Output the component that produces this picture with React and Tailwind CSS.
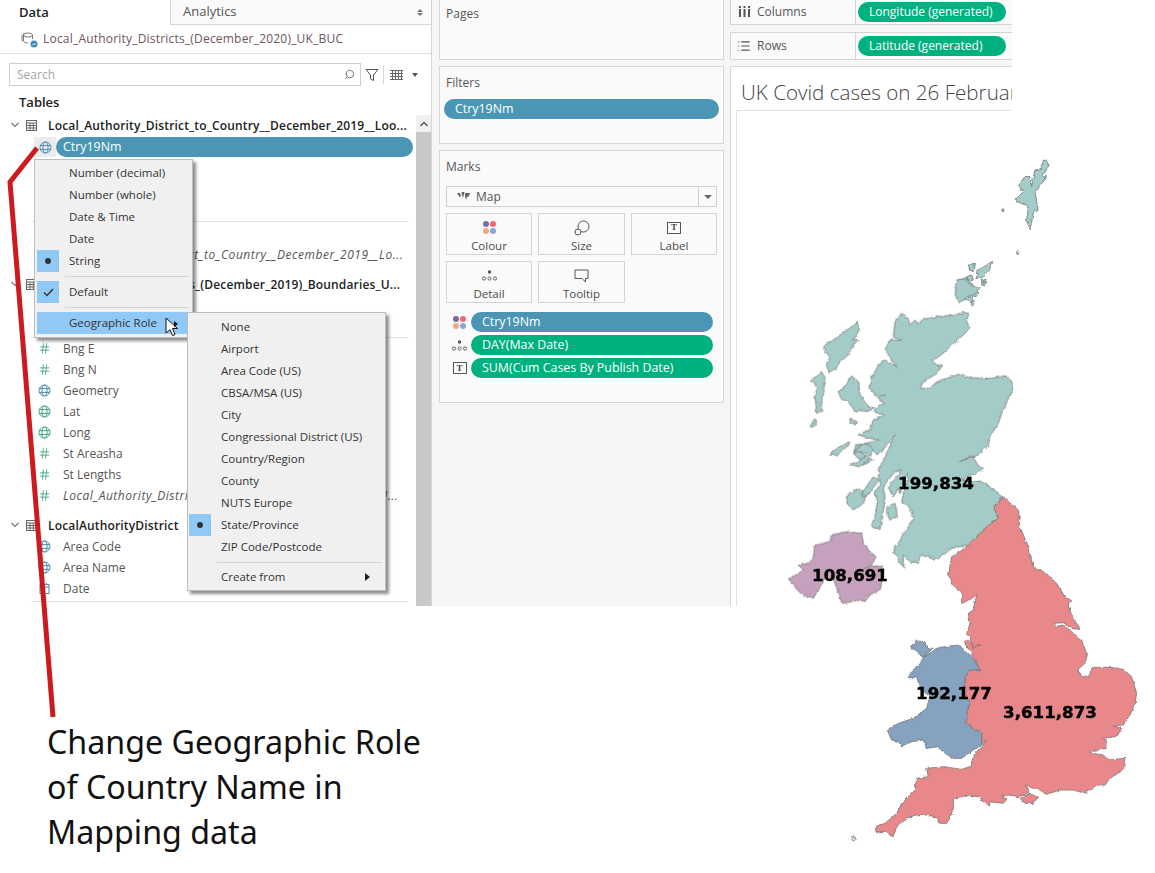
import { Hash, List, Search } from 'lucide-react';

const blue = 'bg-[#4a96b4]';
const green = 'bg-[#00b180]';

const Globe = ({ color = '#4a8fb0' }) => (
  <svg width="13" height="13" viewBox="0 0 13 13" fill="none" stroke={color} strokeWidth="1">
    <circle cx="6.5" cy="6.5" r="5.5" />
    <ellipse cx="6.5" cy="6.5" rx="2.6" ry="5.5" />
    <path d="M1 4.6h11M1 8.4h11" />
  </svg>
);

const HashIcon = () => <Hash size={13} strokeWidth={1.6} className="text-[#3fa583]" />;

const DateIcon = () => (
  <svg width="13" height="13" viewBox="0 0 13 13" fill="none" stroke="#4a8fb0" strokeWidth="1">
    <rect x="2" y="2.5" width="9" height="9" />
    <path d="M2 5h9M4.5 1v2M8.5 1v2" />
  </svg>
);

const TableIcon = () => (
  <svg width="11" height="11" viewBox="0 0 11 11" fill="none" stroke="#666" strokeWidth="1">
    <rect x="0.5" y="0.5" width="10" height="10" />
    <path d="M0.5 3h10M0.5 5.5h10M0.5 8h10M4 3v7.5M7.3 3v7.5" />
  </svg>
);

const Chevron = () => (
  <svg width="8" height="6" viewBox="0 0 8 6" fill="none" stroke="#777" strokeWidth="1.2">
    <path d="M0.5 1l3.5 3.5L7.5 1" />
  </svg>
);

const TableHead = ({ children, className = '' }) => (
  <div className={`flex h-[20px] items-center pl-[8px] ${className}`}>
    <span className="flex w-[14px] justify-center"><Chevron /></span>
    <span className="ml-[3px] flex w-[12px] justify-center"><TableIcon /></span>
    <span className="ml-[11px] w-[365px] truncate pt-[2px] text-[12px] font-semibold tracking-[0.16px] text-[#222]">{children}</span>
  </div>
);

const Field = ({ icon, children, italic }) => (
  <div className="flex h-[21px] items-center pl-[38px]">
    <span className="flex w-[13px] justify-center">{icon}</span>
    <span className={`ml-[12px] w-[345px] truncate text-[12px] text-[#555] ${italic ? 'italic tracking-[0.53px]' : ''}`}>{children}</span>
  </div>
);

const Dots = () => (
  <span className="grid grid-cols-2 gap-[1px]">
    <i className="h-[6px] w-[6px] rounded-full bg-[#7d6b98]" />
    <i className="h-[6px] w-[6px] rounded-full bg-[#f0677c]" />
    <i className="h-[6px] w-[6px] rounded-full bg-[#f2a87c]" />
    <i className="h-[6px] w-[6px] rounded-full bg-[#86a8d4]" />
  </span>
);

const DetailIcon = () => (
  <svg width="15" height="11" viewBox="0 0 15 11" fill="none" stroke="#555" strokeWidth="0.9">
    <circle cx="7.5" cy="2" r="1.7" fill="#555" stroke="none" />
    <circle cx="2" cy="8.5" r="1.6" />
    <circle cx="7.5" cy="8.5" r="1.6" />
    <circle cx="13" cy="8.5" r="1.6" />
  </svg>
);

const LabelIcon = () => (
  <span className="flex h-[12px] w-[14px] items-center justify-center border border-[#555] font-['Liberation_Serif',serif] text-[9px] font-bold leading-none text-[#444]">T</span>
);

const SizeIcon = () => (
  <svg width="16" height="16" viewBox="0 0 16 16" fill="none" stroke="#555" strokeWidth="1">
    <circle cx="9.5" cy="6.5" r="5.5" />
    <circle cx="4" cy="12" r="3" fill="#fafafa" />
  </svg>
);

const TooltipIcon = () => (
  <svg width="15" height="14" viewBox="0 0 15 14" fill="none" stroke="#555" strokeWidth="1">
    <path d="M1 1h13v8.5h-2.5V13L8 9.5H1z" />
  </svg>
);

const MarkButton = ({ icon, label }) => (
  <div className="flex h-[42px] flex-col items-center border border-[#d4d4d4] bg-[#fafafa]">
    <span className="flex h-[25px] items-center pt-[2px]">{icon}</span>
    <span className="text-[11.5px] leading-[14px] text-[#4a4a4a]">{label}</span>
  </div>
);

const Pill = ({ color, size = 'text-[12.4px]', className = 'pl-[11px]', children }) => (
  <div className={`flex h-[20px] items-center rounded-full text-white ${size} ${color} ${className}`}>{children}</div>
);

const Box = ({ className = '', children }) => (
  <div className={`border border-[#d6d6d6] bg-[#fafafa] ${className}`}>{children}</div>
);

const MenuRow = ({ mark, active, arrow, children }) => (
  <div className={`mx-[2px] flex h-[22px] items-center text-[11.5px] text-[#333] ${active ? 'bg-[#90c8f6]' : ''}`}>
    <span className={`flex h-[22px] w-[22px] items-center justify-center ${mark ? 'bg-[#90c8f6]' : ''}`}>
      {mark === 'dot' && <i className="h-[6px] w-[6px] rounded-full bg-[#333]" />}
      {mark === 'check' && (
        <svg width="11" height="9" viewBox="0 0 11 9" fill="none" stroke="#333" strokeWidth="1.4"><path d="M1 4.5l3 3L10 1" /></svg>
      )}
    </span>
    <span className="ml-[10px] flex-1">{children}</span>
    {arrow && <i className="mr-[14px] h-0 w-0 border-y-[4px] border-l-[5px] border-y-transparent border-l-[#222]" />}
  </div>
);

const MenuLine = ({ className = '' }) => <div className={`h-px bg-[#d4d4d4] ${className}`} />;

const typeRows = ['Number (decimal)', 'Number (whole)', 'Date & Time', 'Date'];
const roles = ['None', 'Airport', 'Area Code (US)', 'CBSA/MSA (US)', 'City', 'Congressional District (US)', 'Country/Region', 'County', 'NUTS Europe'];

const TypeMenu = () => (
  <div className="absolute left-[34px] top-[159px] w-[159px] border border-[#bdbdbd] bg-[#f0f0f0] pb-[3px] pt-[2px] shadow-[3px_3px_3px_rgba(0,0,0,0.45)]">
    {typeRows.map((t) => <MenuRow key={t}>{t}</MenuRow>)}
    <MenuRow mark="dot">String</MenuRow>
    <div className="flex h-[9px] items-center pl-[30px] pr-[3px]"><MenuLine className="w-full" /></div>
    <MenuRow mark="check">Default</MenuRow>
    <div className="flex h-[9px] items-center pl-[30px] pr-[3px]"><MenuLine className="w-full" /></div>
    <MenuRow active>Geographic Role</MenuRow>
  </div>
);

const RoleMenu = () => (
  <div className="absolute left-[187px] top-[312px] w-[199px] border border-[#bdbdbd] bg-[#f0f0f0] pb-[2px] pt-[3px] shadow-[3px_3px_3px_rgba(0,0,0,0.45)]">
    <div className="-mx-px">
      {roles.map((t) => <MenuRow key={t}>{t}</MenuRow>)}
      <MenuRow mark="dot">State/Province</MenuRow>
      <MenuRow>ZIP Code/Postcode</MenuRow>
      <div className="flex h-[8px] items-center pl-[30px] pr-[4px]"><MenuLine className="w-full" /></div>
      <MenuRow arrow>Create from</MenuRow>
    </div>
  </div>
);

const Cursor = () => (
  <svg className="absolute left-[165px] top-[317px]" width="16" height="21" viewBox="0 0 16 21">
    <path d="M1 1v15l4-3.5 2.5 6 2.5-1-2.5-6H12.5z" fill="#fff" stroke="#111" strokeWidth="1" />
    <path d="M9 4l4 3-4 3z" fill="#111" />
  </svg>
);

const DataPane = () => (
  <div className="relative h-full w-[432px] shrink-0 border-r border-[#d6d6d6] bg-white">
    <div className="flex h-[25px]">
      <div className="flex w-[170px] items-center pl-[19px] text-[13px] font-semibold text-[#222]">Data</div>
      <div className="flex flex-1 items-center justify-between border-b border-l border-[#d6d6d6] bg-[#fafafa] pl-[12px] pr-[8px] text-[13px] text-[#555]">
        Analytics
        <span className="flex flex-col gap-[1px]">
          <i className="h-0 w-0 border-x-[3px] border-b-[3px] border-x-transparent border-b-[#777]" />
          <i className="h-0 w-0 border-x-[3px] border-t-[3px] border-x-transparent border-t-[#777]" />
        </span>
      </div>
    </div>
    <div className="flex h-[29px] items-center border-b border-[#e0e0e0] pl-[21px]">
      <svg width="17" height="17" viewBox="0 0 17 17" fill="none" stroke="#777" strokeWidth="1">
        <ellipse cx="7" cy="4" rx="4.5" ry="2" />
        <path d="M2.5 4v6c0 1 2 2 4.500 2M11.500 4v4M4 2.500C2 3 1 4 1 5v5" />
        <circle cx="13" cy="13" r="3.500" fill="#3f8fb3" stroke="none" />
        <path d="M11.500 13l1 1 2-2" stroke="#fff" />
      </svg>
      <span className="ml-[5px] text-[12px] tracking-[0.2px] text-[#6d5560]">Local_Authority_Districts_(December_2020)_UK_BUC</span>
    </div>
    <div className="mt-[9px] flex h-[23px] items-center pl-[9px]">
      <div className="flex h-[23px] w-[352px] items-center justify-between border border-[#cfcfcf] pl-[7px] pr-[5px] text-[12px] text-[#a5a5a5]">
        Search
        <Search size={11} strokeWidth={1.5} className="-scale-x-100 text-[#444]" />
      </div>
      <svg className="ml-[4px]" width="14" height="14" viewBox="0 0 14 14" fill="none" stroke="#555" strokeWidth="1">
        <path d="M1 1.500h12L8.500 7v5.500L5.500 11V7z" />
      </svg>
      <div className="ml-[4px] h-[18px] w-px bg-[#d6d6d6]" />
      <svg className="ml-[6px]" width="13" height="10" viewBox="0 0 13 10" fill="none" stroke="#666" strokeWidth="1">
        <path d="M0 .5h13M0 3.500h13M0 6.500h13M0 9.500h13M2.500 0v10M5.500 0v10M8.500 0v10M11.500 0v10" />
      </svg>
      <i className="ml-[9px] h-0 w-0 border-x-[3px] border-t-[4px] border-x-transparent border-t-[#555]" />
    </div>
    <div className="mt-[9px] h-[14px] pl-[19px] text-[13px] font-semibold leading-[14px] text-[#222]">Tables</div>
    <div className="mt-[6px] flex">
      <div className="w-[416px]">
        <TableHead>Local_Authority_District_to_Country__December_2019__Loo...</TableHead>
        <div className="mt-[2px] flex h-[20px] items-center pl-[34px]">
          <span className="flex h-[20px] w-[22px] items-center justify-center bg-[#ececec]"><Globe /></span>
          <Pill color={blue} className="w-[357px] pl-[7px]">Ctry19Nm</Pill>
        </div>
        <div className="mx-[31px] mt-[64px] h-px w-[378px] bg-[#e2e2e2]" />
        <div className="mt-[22px]"><Field icon={<HashIcon />} italic>Local_Authority_District_to_Country__December_2019__Lo...</Field></div>
        <TableHead className="mt-[9px]">Local_Authority_Districts_(December_2019)_Boundaries_U...</TableHead>
        <div className="mx-[31px] mt-[43px] h-px w-[378px] bg-[#e2e2e2]" />
        <Field icon={<HashIcon />}>Bng E</Field>
        <Field icon={<HashIcon />}>Bng N</Field>
        <Field icon={<Globe />}>Geometry</Field>
        <Field icon={<Globe color="#3fa583" />}>Lat</Field>
        <Field icon={<Globe color="#3fa583" />}>Long</Field>
        <Field icon={<HashIcon />}>St Areasha</Field>
        <Field icon={<HashIcon />}>St Lengths</Field>
        <Field icon={<HashIcon />} italic>Local_Authority_District_to_Country__December_2019__U...</Field>
        <TableHead className="mt-[9px]">LocalAuthorityDistrict</TableHead>
        <div className="mt-px">
          <Field icon={<Globe />}>Area Code</Field>
          <Field icon={<Globe />}>Area Name</Field>
          <Field icon={<DateIcon />}>Date</Field>
        </div>
        <div className="mx-[31px] mt-[2px] h-px w-[378px] bg-[#e2e2e2]" />
      </div>
      <div className="w-[15px]">
        <div className="flex h-[17px] items-center justify-center bg-[#f0f0f0]">
          <svg width="8" height="6" viewBox="0 0 8 6" fill="none" stroke="#555" strokeWidth="1.3"><path d="M0.5 5L4 1.500 7.500 5" /></svg>
        </div>
        <div className="h-[480px] bg-[#c8c8c8]" />
      </div>
    </div>
    <TypeMenu />
    <RoleMenu />
    <Cursor />
  </div>
);

const MarksPane = () => (
  <div className="flex w-[298px] shrink-0 flex-col gap-[6px] pl-[7px] pr-[6px]">
    <Box className="h-[60px] border-t-0 pl-[6px] pt-[5px] text-[12px] text-[#555]">Pages</Box>
    <Box className="h-[78px] px-[4px] pt-[7px] text-[12px] text-[#555]">
      <div className="pl-[2px]">Filters</div>
      <Pill color={blue} className="mt-[7px] pl-[11px]">Ctry19Nm</Pill>
    </Box>
    <Box className="h-[253px] px-[6px] pt-[7px] text-[12px] text-[#555]">
      <div>Marks</div>
      <div className="mt-[10px] flex h-[21px] items-center justify-between border border-[#d0d0d0] pl-[10px]">
        <span className="flex items-center gap-[6px]">
          <svg width="13" height="9" viewBox="0 0 13 9" fill="#666"><path d="M0 1h3l1 3-1.500 1zM4.500 0h3l-.5 2-1 4-1-3zM8 1h5l-1 3-2 1-1 3-1-4z" /></svg>
          Map
        </span>
        <span className="flex h-full w-[18px] items-center justify-center border-l border-[#d0d0d0]">
          <i className="h-0 w-0 border-x-[4px] border-t-[4px] border-x-transparent border-t-[#666]" />
        </span>
      </div>
      <div className="mt-[6px] grid grid-cols-[86px_87px_86px] gap-x-[6px] gap-y-[6px]">
        <MarkButton icon={<Dots />} label="Colour" />
        <MarkButton icon={<SizeIcon />} label="Size" />
        <MarkButton icon={<LabelIcon />} label="Label" />
        <MarkButton icon={<DetailIcon />} label="Detail" />
        <MarkButton icon={<TooltipIcon />} label="Tooltip" />
      </div>
      <div className="mt-[9px] flex flex-col gap-[3px] pl-[6px]">
        <div className="flex items-center gap-[4px]"><span className="flex w-[15px] justify-center"><Dots /></span><Pill color={blue} className="w-[242px] pl-[11px]">Ctry19Nm</Pill></div>
        <div className="flex items-center gap-[4px]"><span className="flex w-[15px] justify-center"><DetailIcon /></span><Pill color={green} className="w-[242px] pl-[11px]">DAY(Max Date)</Pill></div>
        <div className="flex items-center gap-[4px]"><span className="flex w-[15px] justify-center"><LabelIcon /></span><Pill color={green} className="w-[242px] pl-[11px]">SUM(Cum Cases By Publish Date)</Pill></div>
      </div>
    </Box>
  </div>
);

const Shelf = ({ icon, label, pill, className = '' }) => (
  <div className={`flex border border-r-0 border-[#d6d6d6] bg-[#fafafa] ${className}`}>
    <div className="flex w-[125px] items-center border-r border-[#d6d6d6] pl-[6px] text-[12px] text-[#555]">
      <span className="flex w-[14px] justify-center">{icon}</span>
      <span className="ml-[6px]">{label}</span>
    </div>
    <div className="flex items-center pl-[2px]">
      <Pill color={green} size="text-[12px]" className="w-[148px] pl-[11px]">{pill}</Pill>
    </div>
  </div>
);

const ColumnsIcon = () => (
  <svg width="11" height="11" viewBox="0 0 11 11" fill="#555"><path d="M0 0h2v2H0zM0 3h2v8H0zM4.500 0h2v2h-2zM4.500 3h2v8h-2zM9 0h2v2H9zM9 3h2v8H9z" /></svg>
);

const ViewPane = () => (
  <div className="flex min-w-0 flex-1 flex-col">
    <Shelf className="-mt-[2px] h-[27px]" icon={<ColumnsIcon />} label="Columns" pill="Longitude (generated)" />
    <Shelf className="mt-[7px] h-[28px]" icon={<List size={16} strokeWidth={2} className="text-[#555]" />} label="Rows" pill="Latitude (generated)" />
    <div className="mt-[6px] flex-1 border-l border-t border-[#d6d6d6] bg-white pl-[5px]">
      <div className="flex h-[43px] items-center whitespace-nowrap pl-[5px] pt-[8px] text-[20.6px] font-light text-[#444]">UK Covid cases on 26 February</div>
      <div className="h-full border-l border-t border-[#e2e2e2]" />
    </div>
  </div>
);

// map shapes, traced from the reference at 3x
const scotland = '385,105 400,102 412,112 420,135 435,120 445,130 455,120 490,112 520,108 555,105 580,97 597,100 590,125 597,145 580,165 555,185 525,215 500,235 487,240 500,255 518,255 505,275 495,285 460,305 450,325 480,325 500,305 530,295 565,283 600,293 660,295 710,288 725,305 728,330 710,365 695,400 685,430 660,470 655,495 625,525 590,535 568,545 610,530 620,550 640,565 620,580 590,590 575,600 610,605 630,603 660,620 698,650 672,680 685,715 650,740 620,770 590,795 545,805 520,825 495,840 470,830 450,825 445,850 420,845 400,825 400,850 405,865 390,850 372,815 375,797 385,795 395,770 415,740 430,715 425,690 405,672 395,668 400,640 410,610 415,580 405,590 400,610 390,640 385,625 370,650 355,625 370,600 395,570 375,575 350,605 340,625 345,650 340,690 335,720 330,745 310,745 305,735 318,700 322,660 315,640 330,610 325,590 330,560 345,530 375,465 345,500 325,525 300,510 275,520 295,535 310,540 280,555 260,555 275,545 250,520 258,495 290,490 330,480 300,475 265,465 285,455 300,450 310,420 345,405 310,395 330,375 345,370 325,355 345,345 320,350 300,325 305,290 325,255 345,240 380,260 365,240 345,210 360,180 395,180 370,170 375,125';
const scotlandIslands = [
  '165,195 190,180 210,165 262,127 268,150 250,180 265,180 250,195 235,225 210,245 195,270 175,275 170,250 180,230 165,215',
  '125,300 155,275 165,295 160,320 165,340 155,360 155,395 140,400 135,350 140,320',
  '120,440 135,415 140,425 125,445',
  '203,335 225,318 245,288 265,305 270,345 290,375 315,385 290,395 275,390 255,395 235,365 215,358',
  '240,415 258,425 255,435 240,430',
  '250,520 270,495 290,490 310,510 290,545 270,560 240,555 275,540 290,520 265,515',
  '185,515 235,485 237,495 200,525 182,525',
  '235,640 265,625 290,640 280,670 250,690 230,670',
  '275,640 310,590 325,600 300,640 280,650',
  '350,680 375,670 382,710 360,720 350,700',
  '560,0 590,-5 600,15 630,25 610,45 590,50 570,70 555,50',
  '605,65 612,60 610,78 603,78',
  '640,0 650,5 640,12',
];
const shetland = [
  '915,690 905,660 910,620 870,600 880,590 895,575 880,555 900,530 915,530 920,560 930,510 950,505 955,480 970,485 965,510 950,530 965,530 960,540 945,555 930,575 940,630 925,640 920,665',
  '828,627 836,627 836,635 828,635',
  '876,753 882,753 880,763 876,763',
  '695,890 700,840 725,835 745,860 765,880 745,890 740,905',
  '730,795 748,790 745,815 735,810',
  '755,815 800,785 795,805 770,835 755,835',
  '725,830 740,825 745,840 730,845',
  '770,840 785,845 778,858 770,855',
];
const ni = '55,897 85,880 100,870 85,855 115,850 130,830 135,795 180,785 185,765 230,755 275,760 280,790 300,815 318,830 310,850 285,865 300,858 335,858 340,880 330,930 300,945 285,965 270,960 250,965 215,970 205,935 190,900 170,885 160,905 150,920 130,955 100,945 85,930';
const england = '698,-190 745,-150 750,-100 775,-40 790,20 835,45 860,70 885,110 905,122 895,135 905,165 930,208 905,205 880,188 855,190 855,200 880,195 905,215 935,240 952,285 945,310 922,330 940,350 955,350 970,322 1020,322 1060,328 1085,350 1100,400 1095,430 1080,465 1058,495 1030,497 1055,505 1040,530 1000,535 1012,545 1010,565 965,572 962,578 1000,585 1015,600 1065,595 1060,630 1020,655 1005,675 980,675 945,700 910,690 870,690 830,703 810,690 790,685 765,675 778,690 780,697 745,710 715,705 695,710 710,718 700,730 660,725 658,738 625,710 600,705 575,710 550,715 550,750 530,790 510,790 495,770 470,765 420,770 385,795 375,815 368,830 345,815 318,815 315,800 345,790 380,760 395,730 420,705 435,690 440,655 475,650 470,625 520,620 575,628 600,620 610,590 640,555 650,540 635,555 635,520 610,505 590,490 590,460 600,430 585,400 585,350 600,330 628,332 625,318 610,310 605,280 580,245 595,240 610,255 632,255 610,265 600,235 590,220 600,190 595,160 610,150 620,105 590,125 575,130 575,100 550,75 535,45 545,-10 570,-25 595,-45 650,-100 685,-125 672,-160';
const wight = '750,715 780,700 803,712 790,730 765,730';
const wales = '460,290 510,262 565,255 590,275 610,295 625,318 628,332 600,330 585,350 585,400 600,430 590,460 590,490 610,505 635,520 635,555 610,570 575,595 550,595 525,580 505,560 470,565 460,540 425,545 395,558 385,545 365,540 352,512 385,490 430,475 470,445 480,410 450,385 440,350 415,355 418,342 450,315';
const anglesey = '422,262 440,243 465,245 470,262 490,265 460,290 445,280';

const UkMap = () => (
  <svg className="pointer-events-none absolute left-0 top-0" width="1155" height="873" viewBox="0 0 1155 873" stroke="#767676" strokeWidth="2.5" strokeLinejoin="round">
    <defs>
      {/* roughens the traced polygons into a coastline */}
      <filter id="coast" x="0" y="0" width="100%" height="100%" filterUnits="userSpaceOnUse">
        <feTurbulence type="fractalNoise" baseFrequency="0.22" numOctaves="2" seed="4" />
        <feDisplacementMap in="SourceGraphic" scale="3.5" xChannelSelector="R" yChannelSelector="G" />
      </filter>
    </defs>
    <g filter="url(#coast)">
      <g transform="translate(725 0) scale(0.3333)" fill="#a3ccc9">
        {shetland.map((p) => <polygon key={p} points={p} />)}
      </g>
      <g transform="translate(770 280) scale(0.3333)">
        <g fill="#a3ccc9">
          <polygon points={scotland} />
          {scotlandIslands.map((p) => <polygon key={p} points={p} />)}
        </g>
        <polygon points={ni} fill="#c6a1bd" />
      </g>
      <g transform="translate(770 560) scale(0.3333)">
        <polygon points={england} fill="#e8888a" />
        <polygon points={wight} fill="#e8888a" />
        <polygon points={wales} fill="#85a2bf" />
        <polygon points={anglesey} fill="#85a2bf" />
        <polygon points="245,830 256,828 255,840 248,842" fill="#fff" />
      </g>
    </g>
  </svg>
);

const MapLabel = ({ className, children }) => (
  <div className={`absolute -translate-x-1/2 -translate-y-1/2 scale-x-[1.11] font-['DejaVu_Sans',sans-serif] text-[15px] font-bold leading-none text-black [-webkit-text-stroke:0.4px_black] ${className}`}>{children}</div>
);

const Leader = () => (
  <svg className="pointer-events-none absolute left-0 top-0" width="200" height="730" viewBox="0 0 200 730" fill="none" stroke="#cc1a1f" strokeWidth="5" strokeLinejoin="miter">
    <polyline points="37,148 10,182 53,717" />
  </svg>
);

export default function App() {
  return (
    <div className="relative h-[873px] w-[1155px] overflow-hidden bg-white font-['Open_Sans',sans-serif]">
      <div className="flex h-[606px] w-[1012px] overflow-hidden bg-[#f5f5f5]">
        <DataPane />
        <MarksPane />
        <ViewPane />
      </div>
      <div className="pl-[47px] pt-[113px] font-['Noto_Sans',sans-serif] text-[32.2px] leading-[45px] text-[#111]">
        Change Geographic Role<br />of Country Name in<br />Mapping data
      </div>
      <UkMap />
      <Leader />
      <MapLabel className="left-[936px] top-[484px]">199,834</MapLabel>
      <MapLabel className="left-[850px] top-[576px]">108,691</MapLabel>
      <MapLabel className="left-[954px] top-[694px]">192,177</MapLabel>
      <MapLabel className="left-[1050px] top-[713px]">3,611,873</MapLabel>
    </div>
  );
}
